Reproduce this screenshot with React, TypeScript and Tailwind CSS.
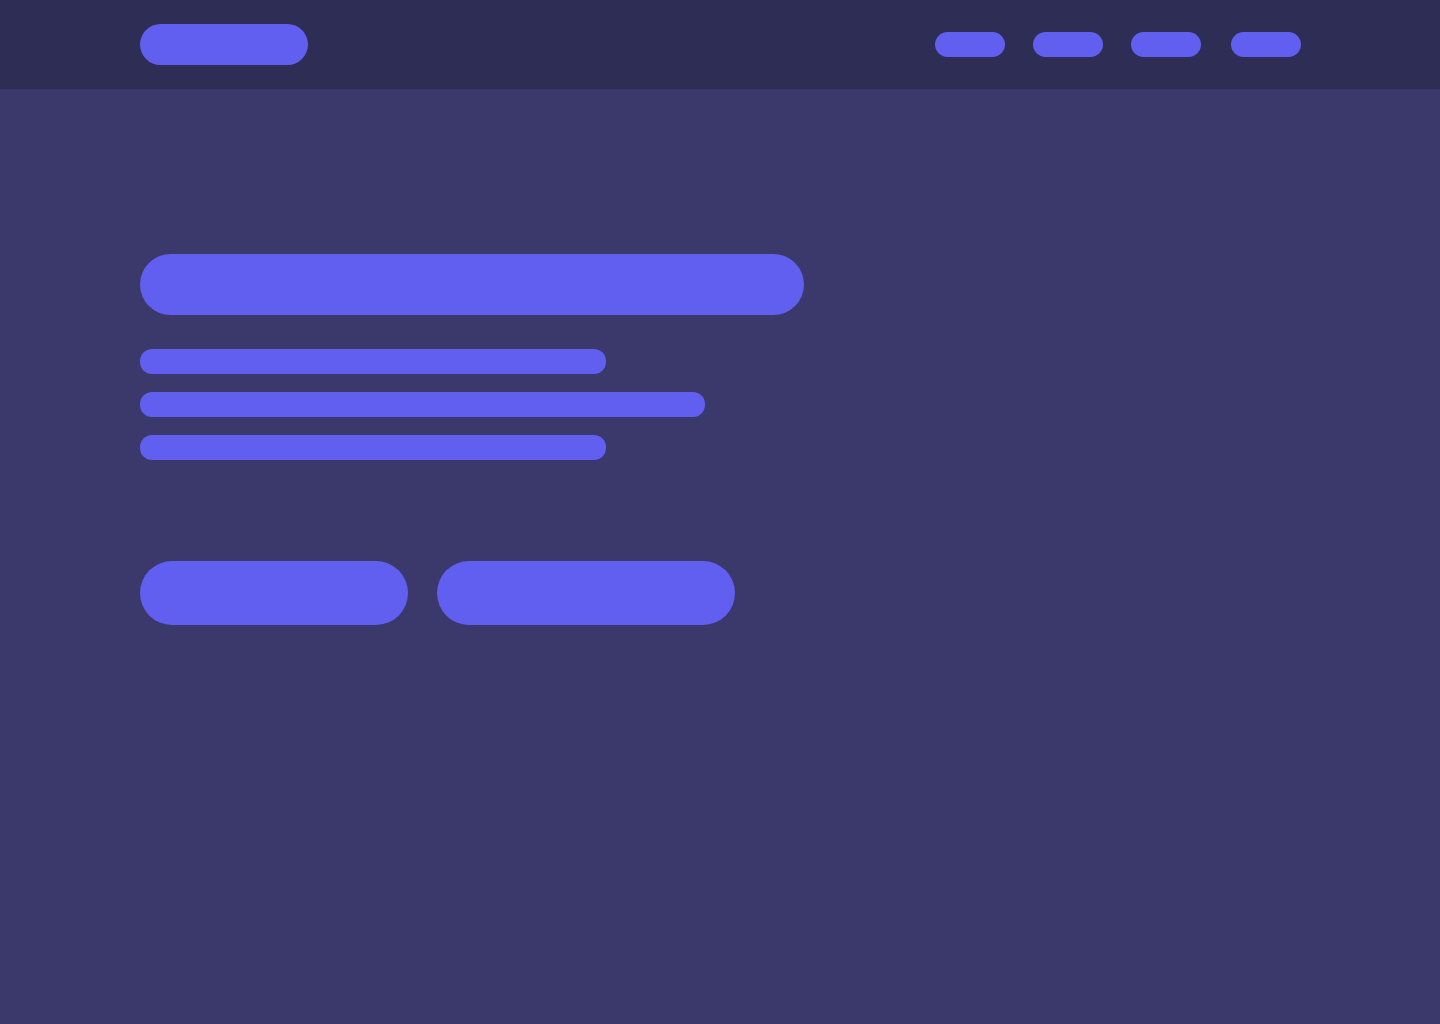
export default function App() {
  return (
    <main className="flex flex-col min-h-screen bg-[#3b386b]">
      {/* Navbar */}
      <nav className="flex justify-between items-center h-[89px] pl-[140px] pr-[139px] bg-[#2e2d55]">
        <div className="w-[168px] h-[41px] rounded-full bg-[#615fef]" />
        <div className="flex items-center gap-[28px]">
          <div className="w-[70px] h-[25px] rounded-full bg-[#615fef]" />
          <div className="w-[70px] h-[25px] rounded-full bg-[#615fef]" />
          <div className="w-[70px] h-[25px] rounded-full bg-[#615fef]" />
          <div className="w-[70px] h-[25px] rounded-full bg-[#615fef] ml-[2px]" />
        </div>
      </nav>

      {/* Hero */}
      <section className="flex flex-col items-start pl-[140px] pt-[165px]">
        <div className="w-[664px] h-[61px] rounded-full bg-[#615fef]" />
        <div className="flex flex-col gap-[18px] mt-[34px]">
          <div className="w-[466px] h-[25px] rounded-xl bg-[#615fef]" />
          <div className="w-[565px] h-[25px] rounded-xl bg-[#615fef]" />
          <div className="w-[466px] h-[25px] rounded-xl bg-[#615fef]" />
        </div>
        <div className="flex gap-[29px] mt-[101px]">
          <div className="w-[268px] h-[64px] rounded-full bg-[#615fef]" />
          <div className="w-[298px] h-[64px] rounded-full bg-[#615fef]" />
        </div>
      </section>
    </main>
  );
}
